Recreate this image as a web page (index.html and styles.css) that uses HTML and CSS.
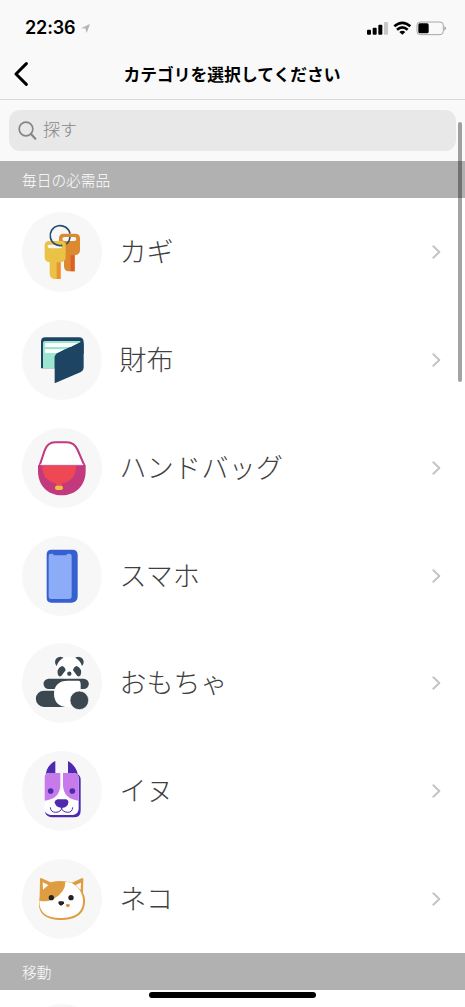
FILE: index.html
```html
<!DOCTYPE html>
<html lang="ja">
<head>
<meta charset="utf-8">
<title>カテゴリを選択してください</title>
<link rel="stylesheet" href="styles.css">
</head>
<body>
<div class="screen">
  <header class="top">
    <div class="status">
      <span class="time">22:36</span>
      <svg class="location" viewBox="0 0 24 24"><path d="M0 11 24 0 15 24 12 12Z" fill="#b4b4b4"/></svg>
      <svg class="indicators" viewBox="0 0 240 45">
        <rect x="0" y="26" width="12" height="15" rx="3"/>
        <rect x="17" y="20" width="12" height="21" rx="3"/>
        <rect x="34" y="11" width="12" height="30" rx="3"/>
        <rect x="51" y="3" width="12" height="38" rx="3" fill="#c8c8c8"/>
        <g fill="none" stroke="#000" stroke-width="8"><path d="M82 16Q106-5 130 16"/><path d="M90 26Q106 12 122 26"/></g>
        <path d="M97 33Q106 26 115 33L106 41Z"/>
        <rect x="150" y="3" width="79" height="38" rx="10" fill="none" stroke="#a6a6a6" stroke-width="3"/>
        <rect x="154" y="7" width="31" height="30" rx="5"/>
        <path d="M232 16q5 2 5 6t-5 7Z" fill="#a6a6a6"/>
      </svg>
    </div>
    <div class="nav">
      <svg class="back" viewBox="0 0 42 72"><path d="M37 5 6 36 37 67" fill="none" stroke="#000" stroke-width="9" stroke-linecap="round" stroke-linejoin="round"/></svg>
      <h1 class="title">カテゴリを選択してください</h1>
    </div>
  </header>
  <div class="search-area">
    <div class="search">
      <svg class="magnifier" viewBox="0 0 57 57"><g fill="none" stroke="#858588" stroke-linecap="round"><circle cx="24" cy="24" r="20.5" stroke-width="5"/><path d="m39 39 13 14" stroke-width="6.5"/></g></svg>
      <span>探す</span>
    </div>
  </div>
  <h2 class="section">毎日の必需品</h2>
  <ul class="list">
    <li class="row">
      <svg class="icon" viewBox="37 36 240 240">
        <path d="M161 101H197Q211 101 211 115V151Q211 164 195 166V214H178Q163 214 163 199V166L148 150V115Q148 101 161 101Z" fill="#dc8930"/>
        <path d="M183 166h12v48h-12Z" fill="#dc5f26"/>
        <rect x="158" y="111" width="42" height="12" rx="6" fill="#f7f7f7"/>
        <path d="M118 123H155Q168 123 168 137V172Q168 186 153 187V237H137Q120 237 120 218V187Q105 186 105 172V137Q105 123 118 123Z" fill="#e9c246"/>
        <path d="M141 187h12v50h-12Z" fill="#ed9234"/>
        <rect x="114" y="134" width="43" height="11" rx="5.500" fill="#f7f7f7"/>
        <path d="M158 136A30 30 0 1 1 181 101" fill="none" stroke="#24506f" stroke-width="5"/>
        <path d="M181 111Q179 126 170 132" fill="none" stroke="#24506f" stroke-width="5"/>
      </svg>
      <span class="name">カギ</span><svg class="chevron" viewBox="0 0 27 42"><path d="m4 4 18 17L4 38"/></svg>
    </li>
    <li class="row">
      <svg class="icon" viewBox="37 29 240 240">
        <path d="M94 174V94Q94 81 107 81H208Q222 81 222 95V130H135V174Z" fill="#1d4463"/>
        <path d="M100 173V97Q100 92 106 92H212V96L145 127Q135 132 135 140V173Z" fill="#9ce6d0"/>
        <path d="M107 98H205L184 110H107Q104 104 107 98ZM107 117H164L146 128H107Q103 122 107 117Z" fill="#fff"/>
        <path d="M135 219V142Q135 132 145 127L211 98Q222 92 222 102V171Q222 181 212 186Z" fill="#1d4463"/>
      </svg>
      <span class="name">財布</span><svg class="chevron" viewBox="0 0 27 42"><path d="m4 4 18 17L4 38"/></svg>
    </li>
    <li class="row">
      <svg class="icon" viewBox="37 22 240 240">
        <path d="M90 134 105 89Q114 65 136 65H171Q194 65 204 88L224 134Z" fill="#fff" stroke="#c2397d" stroke-width="6"/>
        <path d="M85 134H228V151C228 195 197 224 156 224S85 195 85 151Z" fill="#c2397d"/>
        <path d="M98 135H199C201 162 185 184 157 188V196H139V188C112 184 96 162 98 135Z" fill="#ee4854"/>
        <path d="M92 132H221" stroke="#fff" stroke-width="3"/>
        <rect x="136" y="195" width="24" height="13" rx="6" fill="#e9c33f"/>
      </svg>
      <span class="name wide">ハンドバッグ</span><svg class="chevron" viewBox="0 0 27 42"><path d="m4 4 18 17L4 38"/></svg>
    </li>
    <li class="row">
      <svg class="icon" viewBox="37 16 240 240">
        <path d="M125 57H188Q204 57 204 73V196Q204 216 184 216H125Q111 216 111 202V71Q111 57 125 57Z" fill="#365fcf"/>
        <path d="M124 69H128Q132 69 132 74H170Q171 69 175 69H179Q186 69 186 76V197Q186 205 178 205H124Q117 205 117 198V76Q117 69 124 69Z" fill="#8dacf8"/>
      </svg>
      <span class="name">スマホ</span><svg class="chevron" viewBox="0 0 27 42"><path d="m4 4 18 17L4 38"/></svg>
    </li>
    <li class="row">
      <svg class="icon" viewBox="37 25 240 240">
        <g fill="#3b4850"><circle cx="152" cy="82" r="16"/><circle cx="206" cy="82" r="16"/></g>
        <ellipse cx="179" cy="100" rx="38" ry="34" fill="#fff"/>
        <g fill="#3b4850">
          <path d="M157 94Q166 96 168 107L155 124Q149 128 145 121Q139 102 157 94Z"/>
          <path d="M201 94Q192 96 190 107L203 124Q209 128 213 121Q219 102 201 94Z"/>
          <circle cx="179" cy="117" r="6.500"/>
          <path d="M117 132H222A15.500 15.500 0 0 1 222 163H117A15.500 15.500 0 0 1 117 132Z"/>
          <path d="M103 168H165V217H103A24.500 24.500 0 0 1 103 168Z"/>
        </g>
        <path d="M174 138H207Q213 138 213 150V165Q190 175 180 193Q180 207 188 217H174C148 217 133 202 133 177S148 138 174 138Z" fill="#fff"/>
        <circle cx="209" cy="197" r="28" fill="#3b4850" stroke="#fff" stroke-width="2"/>
      </svg>
      <span class="name">おもちゃ</span><svg class="chevron" viewBox="0 0 27 42"><path d="m4 4 18 17L4 38"/></svg>
    </li>
    <li class="row">
      <svg class="icon" viewBox="37 18 240 240">
        <path d="M108 88Q112 60 137 48V88ZM175 48Q200 62 204 88Q213 93 213 104V197Q213 217 192 217H127Q108 216 106 198Q116 210 130 210H190L205 190L200 90L175 84Z" fill="#4e2bae"/>
        <path d="M118 84H192Q207 84 207 102V190Q207 210 187 210H126Q105 210 105 190V98Q105 84 118 84Z" fill="#fff"/>
        <path d="M118 84H152V121Q151 162 105 167V98Q105 84 118 84ZM160 84H192Q207 84 207 102V167Q161 162 160 121Z" fill="#c77bea"/>
        <g fill="#4e2bae"><circle cx="123" cy="138" r="8.500"/><circle cx="188" cy="138" r="8.500"/><path d="M144 163H168Q176 164 176 172Q175 188 156 189Q137 187 135 172Q136 164 144 163Z"/></g>
        <path d="M122 187Q123 202 138 202Q155 201 156 188Q157 201 174 202Q188 202 189 187" fill="none" stroke="#4e2bae" stroke-width="3"/>
      </svg>
      <span class="name">イヌ</span><svg class="chevron" viewBox="0 0 27 42"><path d="m4 4 18 17L4 38"/></svg>
    </li>
    <li class="row">
      <svg class="icon" viewBox="37 27 240 240">
        <path d="M91 86Q92 83 96 85L123 97Q155 89 187 98L217 84Q221 83 221 88L220 128Q229 145 225 165C220 196 193 210 155 210C116 210 86 195 88 159L90 137Z" fill="#df9d42"/>
        <path d="M99 97 116 105 100 119ZM214 98 198 105 213 120Z" fill="#fff"/>
        <path d="M167 95C195 96 218 119 220 150C221 189 194 204 151 204C112 204 88 188 89 152Q109 158 133 146Q168 125 167 95Z" fill="#fff"/>
        <g fill="#232323"><circle cx="125" cy="143" r="8"/><circle cx="184" cy="143" r="8"/><path d="M149 154H160Q164 155 163 160Q160 166 154 167Q148 165 146 159Q146 155 149 154Z"/></g>
        <path d="M170 163Q176 160 181 165Q180 171 174 172Q167 169 170 163Z" fill="#df8735"/>
      </svg>
      <span class="name">ネコ</span><svg class="chevron" viewBox="0 0 27 42"><path d="m4 4 18 17L4 38"/></svg>
    </li>
  </ul>
  <h2 class="section">移動</h2>
  <div class="row"><span class="icon"></span></div>
  <i class="scrollbar"></i>
  <i class="home-bar"></i>
</div>
</body>
</html>
```
FILE: styles.css
```css
* { box-sizing: border-box; }
body { margin: 0; background: #fff; font-family: "Noto Sans CJK JP", sans-serif; }
.screen { position: relative; width: 465px; height: 1007px; overflow: hidden; }
.top { height: 100px; padding-top: 13px; background: #f9f9f9; border-bottom: 1px solid #d8d8d8; }
.status { display: flex; align-items: center; height: 30px; padding: 0 19px 0 25px; }
.time { width: 51px; font: 600 18px/30px Inter, sans-serif; letter-spacing: -.15px; white-space: nowrap; }
.location { width: 9px; height: 9px; margin-left: 5px; }
.indicators { width: 80px; height: 15px; margin-left: auto; margin-right: -1px; }
.nav { display: grid; grid-template-columns: 108px 1fr 109px; align-items: center; height: 62px; }
.back { width: 14px; height: 24px; margin-left: 14px; }
.title { margin: 0; font-size: 16.8px; font-weight: 700; line-height: 24px; text-align: center; white-space: nowrap; }
.search-area { height: 61px; padding: 10px 9px 11px; background: #f9f9f9; }
.search { display: flex; align-items: center; gap: 6px; height: 41px; padding-left: 9px; border-radius: 11px; background: #e8e8e8; color: #858588; font-size: 17px; font-weight: 300; line-height: 38px; }
.search span { padding-bottom: 3px; }
.magnifier { width: 19px; height: 19px; }
.section { height: 37px; margin: 0; padding-left: 22px; background: #b1b1b1; color: #fff; font-size: 14.7px; font-weight: 300; line-height: 37px; }
.list { height: 755px; margin: 0; padding: 0; list-style: none; }
.row { display: flex; align-items: center; height: 107.86px; padding: 0 24px 0 22px; }
.icon { flex: none; width: 80px; height: 80px; border-radius: 50%; background: #f7f7f7; }
.name { margin-left: 17.5px; padding-bottom: 2px; color: #404040; font-size: 27px; font-weight: 300; line-height: 40px; }
.wide { letter-spacing: .3px; }
.chevron { width: 9px; height: 14px; margin-left: auto; fill: none; stroke: #c4c4c6; stroke-width: 6; stroke-linecap: round; stroke-linejoin: round; }
.scrollbar { position: absolute; top: 122px; right: 3px; width: 4px; height: 260px; border-radius: 2px; background: rgba(0, 0, 0, .36); }
.home-bar { position: absolute; top: 992px; left: 149px; width: 167px; height: 6px; border-radius: 3px; background: #000; }
```
